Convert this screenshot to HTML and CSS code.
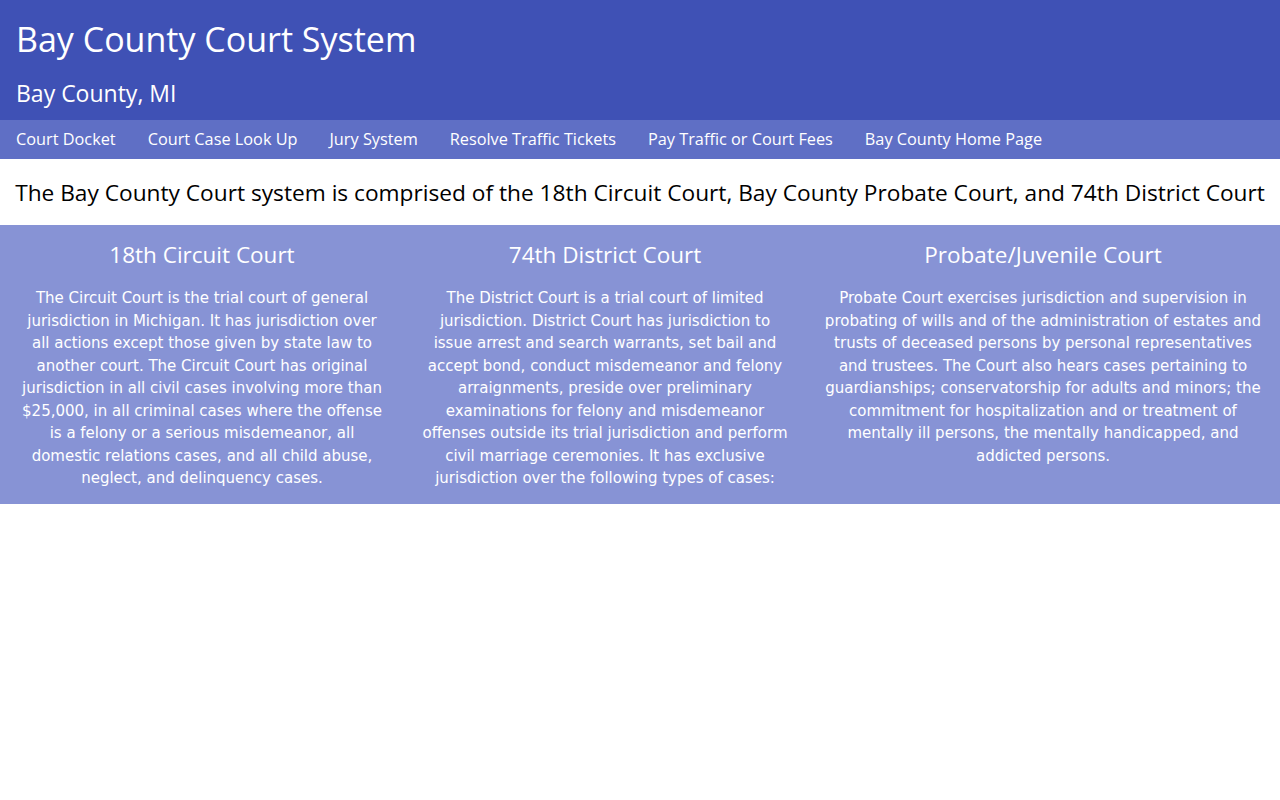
FILE: index.html
```html
<!DOCTYPE html>
<html lang="en">
<head>
<meta charset="utf-8">
<title>Bay County Court System</title>
<link rel="stylesheet" href="styles.css">
</head>
<body>
<header class="masthead">
  <h1 class="site-title">Bay County Court System</h1>
  <p class="site-sub">Bay County, MI</p>
</header>
<nav class="topnav">
  <a href="#">Court Docket</a>
  <a href="#">Court Case Look Up</a>
  <a href="#">Jury System</a>
  <a href="#">Resolve Traffic Tickets</a>
  <a href="#">Pay Traffic or Court Fees</a>
  <a href="#">Bay County Home Page</a>
</nav>
<p class="intro">The Bay County Court system is comprised of the 18th Circuit Court, Bay County Probate Court, and 74th District Court</p>
<section class="courts">
  <div class="court">
    <h2>18th Circuit Court</h2>
    <p>The Circuit Court is the trial court of general jurisdiction in Michigan. It has jurisdiction over all actions except those given by state law to another court. The Circuit Court has original jurisdiction in all civil cases involving more than $25,000, in all criminal cases where the offense is a felony or a serious misdemeanor, all domestic relations cases, and all child abuse, neglect, and delinquency cases.</p>
  </div>
  <div class="court">
    <h2>74th District Court</h2>
    <p>The District Court is a trial court of limited jurisdiction. District Court has jurisdiction to issue arrest and search warrants, set bail and accept bond, conduct misdemeanor and felony arraignments, preside over preliminary examinations for felony and misdemeanor offenses outside its trial jurisdiction and perform civil marriage ceremonies. It has exclusive jurisdiction over the following types of cases:</p>
  </div>
  <div class="court">
    <h2>Probate/Juvenile Court</h2>
    <p>Probate Court exercises jurisdiction and supervision in probating of wills and of the administration of estates and trusts of deceased persons by personal representatives and trustees. The Court also hears cases pertaining to guardianships; conservatorship for adults and minors; the commitment for hospitalization and or treatment of mentally ill persons, the mentally handicapped, and addicted persons.</p>
  </div>
</section>
</body>
</html>
```

FILE: styles.css
```css
html, body {
  margin: 0;
  padding: 0;
  background: #ffffff;
}

body {
  font-family: "Open Sans", "Noto Sans", sans-serif;
  color: #000;
}

.masthead {
  background: #3f51b5;
  color: #ffffff;
  padding: 15px 16px 11px 16px;
}

.site-title {
  margin: 0;
  font-size: 34px;
  font-weight: 400;
  line-height: 48px;
}

.site-sub {
  margin: 14px 0 0 0;
  font-size: 23px;
  line-height: 32px;
}

.topnav {
  background: #5f6fc5;
  display: flex;
  height: 39px;
  align-items: center;
}

.topnav a {
  color: #ffffff;
  text-decoration: none;
  font-size: 16.3px;
  line-height: 39px;
  padding: 0 16px;
}

.intro {
  margin: 0;
  padding: 18px 0 16px 0;
  text-align: center;
  font-size: 22.7px;
  line-height: 32px;
}

.courts {
  background: #8793d5;
  color: #ffffff;
  display: grid;
  grid-template-columns: 404px 402px 1fr;
  padding: 14px 0 14px 0;
}

.court {
  text-align: center;
  padding: 0 18px;
}

.court h2 {
  margin: 0;
  font-size: 22.5px;
  font-weight: 400;
  line-height: 32px;
}

.court p {
  margin: 16px 0 0 0;
  font-family: "DejaVu Sans", sans-serif;
  font-size: 15px;
  line-height: 22.5px;
}
```
